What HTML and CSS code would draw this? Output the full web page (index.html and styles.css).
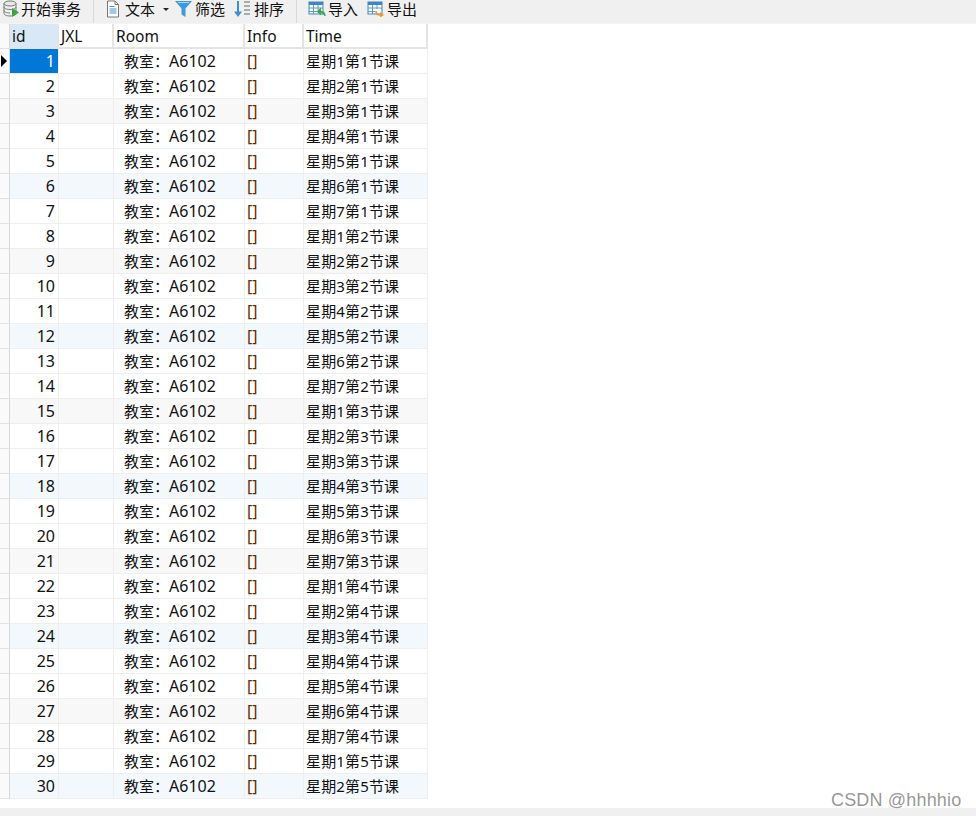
FILE: index.html
```html
<!DOCTYPE html>
<html lang="zh">
<head>
<meta charset="utf-8">
<title>表数据</title>
<link rel="stylesheet" href="styles.css">
</head>
<body>
<div class="page">
  <div class="toolbar">
    <div class="tool tool-begin">
      <svg class="icon" viewBox="0 0 18 18" width="18" height="18"><ellipse cx="8" cy="3.5" rx="6" ry="2.5" fill="#e8e8e8" stroke="#777"/><path d="M2 3.5v10c0 1.4 2.7 2.5 6 2.5s6-1.1 6-2.5v-10M2 7c0 1.4 2.700 2.500 6 2.500S14 8.400 14 7M2 10.500c0 1.400 2.700 2.500 6 2.500" fill="none" stroke="#777"/><path d="M10 8l7 4.500-7 4.500z" fill="#3aa63a"/></svg>
      <span>开始事务</span>
    </div>
    <div class="sep"></div>
    <div class="tool tool-text">
      <svg class="icon" viewBox="0 0 16 18" width="16" height="18"><path d="M2.500 1h7.500l3.500 3.500V17h-11z" fill="#fff" stroke="#777"/><path d="M10 1v3.500h3.500" fill="none" stroke="#777"/><path d="M4.500 6.500h5M4.500 9h7M4.500 11h7M4.500 13h7" stroke="#4a90d0" fill="none"/></svg>
      <span class="spaced">文本</span>
      <span class="caret"></span>
    </div>
    <div class="tool tool-filter">
      <svg class="icon" viewBox="0 0 18 18" width="18" height="18"><path d="M0 1h17l-6.500 7.500V17l-4-2.500V8.500z" fill="#3d9ae0"/><path d="M3 2.500h11" stroke="#a5d3f3"/></svg>
      <span>筛选</span>
    </div>
    <div class="tool tool-sort">
      <svg class="icon" viewBox="0 0 18 18" width="18" height="18"><path d="M4 1v13" stroke="#3d8fd8" stroke-width="2"/><path d="M0 11.500h8L4 17z" fill="#3d8fd8"/><path d="M10 2h6M10 6h6M10 10h6M10 14h6" stroke="#666"/></svg>
      <span>排序</span>
    </div>
    <div class="sep sep-io"></div>
    <div class="tool tool-import">
      <svg class="icon" viewBox="0 0 18 16" width="18" height="16"><rect x="1" y="1" width="14" height="12" fill="#fff" stroke="#3f86c0"/><path d="M1 2.500h14" stroke="#3f86c0" stroke-width="3"/><path d="M1 7h14M1 10.500h9M5.500 4v9M10 4v5" stroke="#3f86c0" stroke-width=".8"/><path d="M17 15c0-3-2-4.500-5-4.500M12.500 8l-3 2.500 3 2.500z" fill="#3da64a" stroke="#3da64a" stroke-width="1.300"/></svg>
      <span>导入</span>
    </div>
    <div class="tool tool-export">
      <svg class="icon" viewBox="0 0 18 16" width="18" height="16"><rect x="1" y="1" width="14" height="12" fill="#fff" stroke="#3f86c0"/><path d="M1 2.500h14" stroke="#3f86c0" stroke-width="3"/><path d="M1 7h14M1 10.500h7M5.500 4v9M10 4v4" stroke="#3f86c0" stroke-width=".8"/><path d="M9 10c0 3 2 4 4.500 4" fill="none" stroke="#f0952a" stroke-width="1.600"/><path d="M13 11l4 3-4 2.500z" fill="#f0952a"/></svg>
      <span>导出</span>
    </div>
  </div>
  <table class="grid">
    <thead>
      <tr><th class="ind"></th><th class="c-id active">id</th><th class="c-jxl">JXL</th><th class="c-room">Room</th><th class="c-info">Info</th><th class="c-time">Time</th></tr>
    </thead>
    <tbody id="rows"></tbody>
  </table>
  <div class="spacer"></div>
  <div class="scrollbar"></div>
  <div class="watermark">CSDN @hhhhio</div>
</div>
<script src="app.js"></script>
</body>
</html>
```

FILE: app.js
```js
var body = document.getElementById('rows');
var html = '';
for (var i = 1; i <= 30; i++) {
  var day = ((i - 1) % 7) + 1;
  var period = Math.floor((i - 1) / 7) + 1;
  var stripe = i % 6 === 0 ? ' class="blue"' : (i % 6 === 3 ? ' class="gray"' : '');
  html += '<tr' + stripe + '>' +
    '<td class="ind">' + (i === 1 ? '<span class="pointer"></span>' : '') + '</td>' +
    '<td class="num' + (i === 1 ? ' selected' : '') + '">' + i + '</td>' +
    '<td></td>' +
    '<td class="room">教室：<span class="latin">A6102</span></td>' +
    '<td class="info">[]</td>' +
    '<td class="time">星期' + day + '第' + period + '节课</td></tr>';
}
body.innerHTML = html;
```

FILE: styles.css
```css
* { box-sizing: border-box; }
html, body { margin: 0; padding: 0; background: #fff; }
body { font-family: "Noto Sans", "Noto Sans CJK SC", sans-serif; color: #111; font-size: 15px; }
.page { position: relative; width: 976px; height: 816px; display: flex; flex-direction: column; overflow: hidden; }

.toolbar { height: 24px; flex: none; background: #f0f0f0; display: flex; align-items: center; font-size: 15px; padding: 0 0 5px 2px; border-bottom: 1px solid #f4f4f4; }
.tool { display: flex; align-items: center; gap: 2px; white-space: nowrap; line-height: 18px; }
.tool-begin { gap: 1px; }
.icon { flex: none; display: block; }
.sep { width: 1px; height: 23px; margin: 0 11px 0 12px; background: #d9d9d9; position: relative; top: 2px; }
.sep-io { margin: 0 11px 0 12px; }
.tool-text { gap: 4px; }
.caret { width: 0; height: 0; border: 3px solid transparent; border-top: 3px solid #222; border-bottom: 0; margin-left: 4px; }
.tool-filter { margin-left: 6px; }
.tool-sort { margin-left: 9px; }
.tool-export { margin-left: 9px; }

.grid { border-collapse: separate; border-spacing: 0; table-layout: fixed; width: 428px; flex: none; }
.grid th, .grid td { padding: 0; height: 25px; border-right: 1px solid #eeeeee; border-bottom: 1px solid #eeeeee; white-space: nowrap; overflow: hidden; line-height: 20px; }
.grid td { padding-bottom: 1px; }
.grid th { font-weight: 400; text-align: left; font-size: 15.5px; padding-left: 2px; background: #fff; border-right: 2px solid #e4e4e4; border-bottom: 2px solid #e4e4e4; }
.ind { width: 10px; }
.grid td.ind, .grid th.ind { background: #fafafa; padding: 0; border-right: 1px solid #d8d8d8; border-bottom: 1px solid #e2e2e2; position: relative; }
.c-id { width: 49px; }
.c-jxl { width: 55px; }
.c-room { width: 131px; }
.c-info { width: 59px; }
.c-time { width: 124px; }
.grid th.active { background: #d9e8f7; }
.grid td.num { text-align: right; padding-right: 3px; font-size: 16px; }
.grid td.selected { background: #0078d7; color: #fff; }
.grid td.room { padding-left: 10px; }
.latin { font-size: 16px; }
.grid td.info { padding-left: 2px; font-size: 16px; color: #5e2e00; }
.grid td.time { padding-left: 2px; letter-spacing: .15px; }
.blue td { background: #f3f8fd; }
.gray td { background: #f8f8f8; }
.pointer { position: absolute; left: 1px; top: 6px; width: 0; height: 0; border-left: 6px solid #000; border-top: 6px solid transparent; border-bottom: 6px solid transparent; }

.spacer { flex: 1; }
.scrollbar { height: 8px; flex: none; background: #f0f0f0; }
.watermark { position: absolute; left: 831px; top: 790px; font-family: "Liberation Sans", sans-serif; font-size: 18px; letter-spacing: .17px; line-height: 21px; color: rgba(110,110,110,.72); white-space: nowrap; }
```
